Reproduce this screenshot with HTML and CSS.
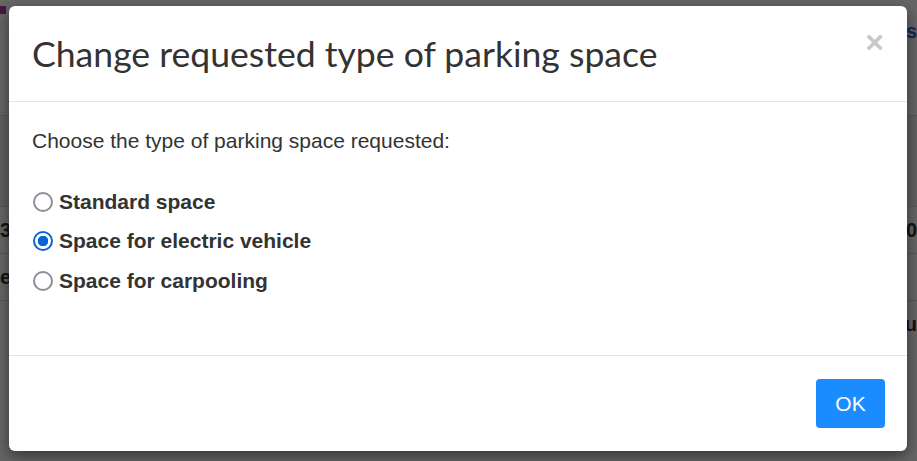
FILE: index.html
```html
<!DOCTYPE html>
<html>
<head>
<meta charset="utf-8">
<link rel="stylesheet" href="styles.css">
</head>
<body>
<div class="page">
  <div class="topbar"><span class="brand"></span><span class="link">s</span></div>
  <div class="rows">
    <div class="row dark"></div>
    <div class="row"><span class="cell">3</span><span class="cell right">0</span></div>
    <div class="row"><span class="cell">er</span></div>
    <div class="row"><span class="cell"></span><span class="cell right">u</span></div>
  </div>
</div>
<div class="backdrop"></div>
<div class="modal">
  <div class="modal-header">
    <h2 class="modal-title">Change requested type of parking space</h2>
    <span class="close">&times;</span>
  </div>
  <div class="modal-body">
    <p class="intro">Choose the type of parking space requested:</p>
    <label class="option"><span class="radio"></span>Standard space</label>
    <label class="option"><span class="radio checked"></span>Space for electric vehicle</label>
    <label class="option"><span class="radio"></span>Space for carpooling</label>
  </div>
  <div class="modal-footer">
    <button class="btn">OK</button>
  </div>
</div>
</body>
</html>
```
FILE: styles.css
```css
html, body {
  margin: 0;
  padding: 0;
}
body {
  width: 917px;
  height: 461px;
  overflow: hidden;
  position: relative;
  font-family: "Liberation Sans", Arial, sans-serif;
  background: #ffffff;
}
.page {
  height: 461px;
  display: flex;
  flex-direction: column;
}
.topbar {
  height: 115px;
  display: flex;
  justify-content: space-between;
  align-items: flex-start;
  padding-top: 20px;
  box-sizing: border-box;
}
.brand {
  width: 6px;
  height: 8px;
  margin-top: -14px;
  background: #b03fa0;
}
.link {
  color: #1e6fd9;
  font-size: 20px;
  font-weight: bold;
}
.rows {
  display: flex;
  flex-direction: column;
}
.row {
  height: 46px;
  border-top: 1px solid #ddd;
  display: flex;
  justify-content: space-between;
  align-items: center;
  color: #333;
  font-weight: bold;
  font-size: 20px;
}
.row.dark {
  height: 90px;
  background: #f2f2f2;
}
.backdrop {
  position: absolute;
  inset: 0;
  background: rgba(0, 0, 0, 0.6);
}
.modal {
  position: absolute;
  left: 9px;
  top: 6px;
  width: 898px;
  height: 445px;
  background: #fff;
  border-radius: 6px;
  box-shadow: 0 5px 15px rgba(0, 0, 0, 0.5);
  display: flex;
  flex-direction: column;
}
.modal-header {
  height: 96px;
  border-bottom: 1px solid #e5e5e5;
  display: flex;
  justify-content: space-between;
  align-items: flex-start;
  padding: 0 23px;
  box-sizing: border-box;
}
.modal-title {
  margin: 0;
  padding-top: 26px;
  font-family: Lato, sans-serif;
  font-weight: normal;
  font-size: 35.6px;
  line-height: 44px;
  color: #333;
}
.close {
  margin-top: 20px;
  font-size: 32px;
  font-weight: bold;
  color: #c8c8c8;
  line-height: 1;
}
.modal-body {
  flex: 1;
  padding: 25px 23px 0;
  border-bottom: 1px solid #e5e5e5;
}
.intro {
  margin: 0 0 27px;
  font-size: 21px;
  line-height: 28px;
  color: #333;
}
.option {
  display: flex;
  align-items: center;
  height: 39.5px;
  font-size: 21px;
  font-weight: bold;
  color: #333;
}
.radio {
  width: 16px;
  height: 16px;
  border: 2px solid #8f8d99;
  border-radius: 50%;
  margin-left: 1px;
  margin-right: 6px;
  box-sizing: content-box;
  background: #fff;
}
.radio.checked {
  border-color: #0a64d8;
  background: radial-gradient(circle, #0a64d8 0 5px, #fff 5.5px);
}
.modal-footer {
  height: 95px;
  display: flex;
  justify-content: flex-end;
  align-items: flex-start;
  padding: 23px 22px 0;
  box-sizing: border-box;
}
.btn {
  width: 69px;
  height: 49px;
  border: none;
  border-radius: 4px;
  background: #1a8cff;
  color: #fff;
  font-family: "Liberation Sans", Arial, sans-serif;
  font-size: 21px;
}
```
